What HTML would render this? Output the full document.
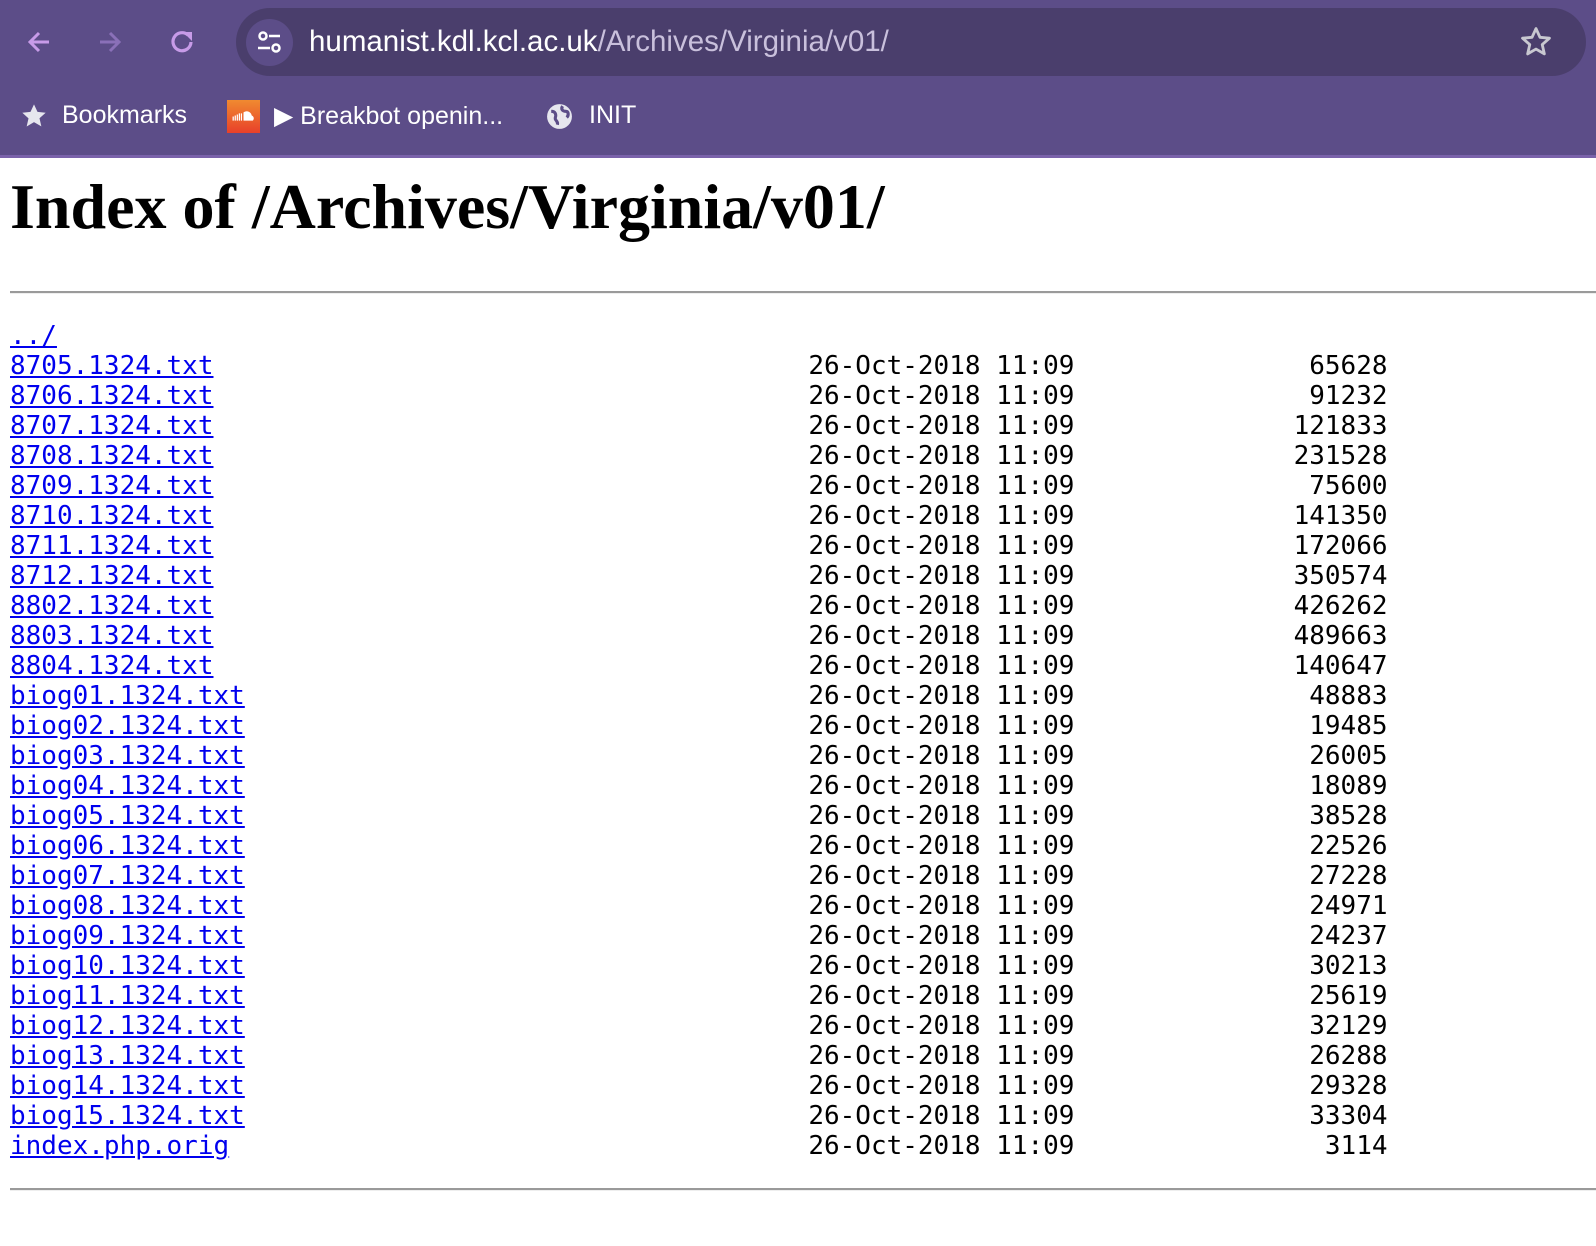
<!DOCTYPE html>
<html><head><meta charset="utf-8"><style>
html,body{margin:0;padding:0;background:#fff;width:1596px;height:1246px;overflow:hidden}
.bar{position:absolute;left:0;top:0;width:1596px;height:158px;background:#5c4d88;border-bottom:3px solid #7a62aa;box-sizing:border-box;font-family:"Liberation Sans",sans-serif}
.url{position:absolute;left:236px;top:8px;width:1350px;height:68px;border-radius:34px;background:#4a3e6c}
.tune{position:absolute;left:246px;top:19px;width:47px;height:47px;border-radius:50%;background:#5c4d88}
.urltext{position:absolute;left:309px;top:25px;font-size:29.5px;color:#fff;white-space:nowrap}
.urltext span{color:#c9c0dc}
.bm{position:absolute;top:101px;font-size:25px;color:#fff;white-space:nowrap}
h1{position:absolute;left:10px;top:170px;margin:0;font-family:"Liberation Serif",serif;font-weight:bold;font-size:64px;white-space:nowrap}
hr{position:absolute;left:10px;width:1586px;margin:0;border:0;border-top:2px solid #9a9a9a;border-bottom:1px solid #eee;height:0}
pre{position:absolute;left:10px;top:321px;margin:0;font-family:"DejaVu Sans Mono","Liberation Mono",monospace;font-size:26px;line-height:30px;color:#000}
a{color:#0000ee}
</style></head><body>
<div class="bar">
<svg style="position:absolute;left:25px;top:28px" width="28" height="28" viewBox="0 0 28 28"><path d="M24 14H5M14 5l-9 9 9 9" stroke="#c79be8" stroke-width="3" fill="none"/></svg>
<svg style="position:absolute;left:96px;top:28px" width="28" height="28" viewBox="0 0 28 28"><path d="M4 14h19M14 5l9 9-9 9" stroke="#8a70b8" stroke-width="3" fill="none"/></svg>
<svg style="position:absolute;left:167px;top:27px" width="30" height="30" viewBox="0 0 30 30"><path d="M24 15a9 9 0 1 1-3-7" stroke="#c79be8" stroke-width="3.2" fill="none"/><path d="M16 5h9v9z" fill="#c79be8"/></svg>
<div class="url"></div>
<div class="tune"><svg width="47" height="47" viewBox="0 0 47 47"><circle cx="17" cy="17" r="3.5" stroke="#fff" stroke-width="2.5" fill="none"/><path d="M23 17h11M12 29h12" stroke="#fff" stroke-width="2.5"/><circle cx="30" cy="29" r="3.5" stroke="#fff" stroke-width="2.5" fill="none"/></svg></div>
<div class="urltext">humanist.kdl.kcl.ac.uk<span>/Archives/Virginia/v01/</span></div>
<svg style="position:absolute;left:1519px;top:25px" width="34" height="34" viewBox="0 0 24 24"><path d="M12 2.5l2.8 6.2 6.7.6-5.1 4.5 1.5 6.6L12 17l-5.9 3.4 1.5-6.6-5.1-4.5 6.7-.6z" stroke="#c8c8d0" stroke-width="2" fill="none" stroke-linejoin="round"/></svg>
<svg style="position:absolute;left:20px;top:102px" width="28" height="28" viewBox="0 0 24 24"><path d="M12 2l3 6.5 7 .7-5.3 4.7 1.6 7L12 17.3 5.7 21l1.6-7L2 9.2l7-.7z" fill="#e6e6ee"/></svg>
<div class="bm" style="left:62px">Bookmarks</div>
<div style="position:absolute;left:227px;top:100px;width:33px;height:33px;background:linear-gradient(#f08a30,#e8402a)"><svg width="33" height="33" viewBox="0 0 32 32"><path d="M6 20v-4M8 20v-5M10 20v-6M12 20v-7M14 20v-7" stroke="#fff" stroke-width="1.2"/><path d="M16 20v-8a5 5 0 0 1 8 3 3 3 0 0 1 1 5z" fill="#fff"/></svg></div>
<div class="bm" style="left:274px">▶ Breakbot openin...</div>
<svg style="position:absolute;left:545px;top:102px" width="29" height="29" viewBox="0 0 28 28"><circle cx="14" cy="14" r="12" fill="#e6e6ee"/><path d="M6 9c4 0 5 3 4 6s3 3 2 7M17 4c-2 3 0 5 3 5s3 4 1 6" stroke="#5c4d88" stroke-width="3" fill="none"/></svg>
<div class="bm" style="left:589px">INIT</div>
</div>
<h1>Index of /Archives/Virginia/v01/</h1>
<hr style="top:291px">
<pre><a href="#">../</a>
<a href="#">8705.1324.txt</a>                                      26-Oct-2018 11:09               65628
<a href="#">8706.1324.txt</a>                                      26-Oct-2018 11:09               91232
<a href="#">8707.1324.txt</a>                                      26-Oct-2018 11:09              121833
<a href="#">8708.1324.txt</a>                                      26-Oct-2018 11:09              231528
<a href="#">8709.1324.txt</a>                                      26-Oct-2018 11:09               75600
<a href="#">8710.1324.txt</a>                                      26-Oct-2018 11:09              141350
<a href="#">8711.1324.txt</a>                                      26-Oct-2018 11:09              172066
<a href="#">8712.1324.txt</a>                                      26-Oct-2018 11:09              350574
<a href="#">8802.1324.txt</a>                                      26-Oct-2018 11:09              426262
<a href="#">8803.1324.txt</a>                                      26-Oct-2018 11:09              489663
<a href="#">8804.1324.txt</a>                                      26-Oct-2018 11:09              140647
<a href="#">biog01.1324.txt</a>                                    26-Oct-2018 11:09               48883
<a href="#">biog02.1324.txt</a>                                    26-Oct-2018 11:09               19485
<a href="#">biog03.1324.txt</a>                                    26-Oct-2018 11:09               26005
<a href="#">biog04.1324.txt</a>                                    26-Oct-2018 11:09               18089
<a href="#">biog05.1324.txt</a>                                    26-Oct-2018 11:09               38528
<a href="#">biog06.1324.txt</a>                                    26-Oct-2018 11:09               22526
<a href="#">biog07.1324.txt</a>                                    26-Oct-2018 11:09               27228
<a href="#">biog08.1324.txt</a>                                    26-Oct-2018 11:09               24971
<a href="#">biog09.1324.txt</a>                                    26-Oct-2018 11:09               24237
<a href="#">biog10.1324.txt</a>                                    26-Oct-2018 11:09               30213
<a href="#">biog11.1324.txt</a>                                    26-Oct-2018 11:09               25619
<a href="#">biog12.1324.txt</a>                                    26-Oct-2018 11:09               32129
<a href="#">biog13.1324.txt</a>                                    26-Oct-2018 11:09               26288
<a href="#">biog14.1324.txt</a>                                    26-Oct-2018 11:09               29328
<a href="#">biog15.1324.txt</a>                                    26-Oct-2018 11:09               33304
<a href="#">index.php.orig</a>                                     26-Oct-2018 11:09                3114
</pre>
<hr style="top:1188px">
</body></html>
